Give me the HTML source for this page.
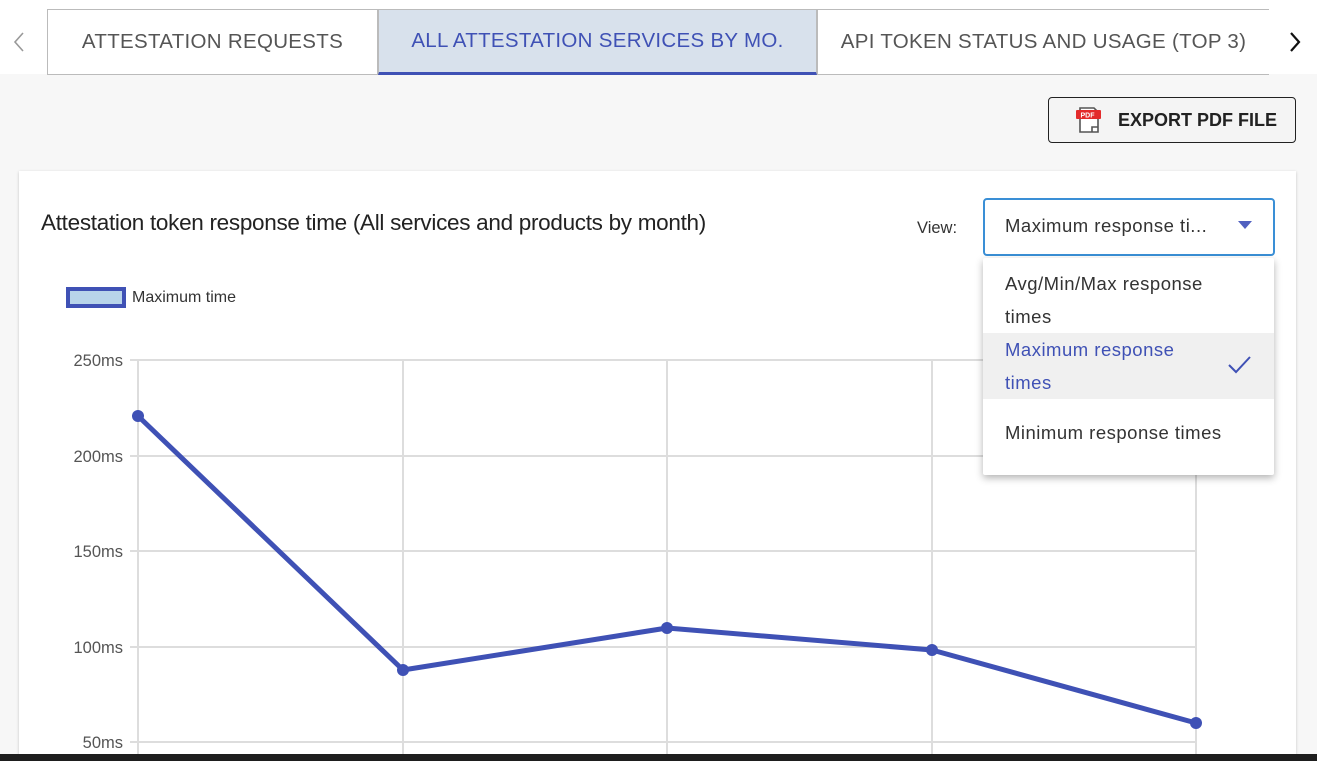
<!DOCTYPE html>
<html style="width:1317px;height:761px;overflow:hidden"><head><style>
*{margin:0;padding:0;box-sizing:border-box}
body{width:1317px;height:761px;overflow:hidden;background:#f7f7f7;font-family:"Liberation Sans",sans-serif;position:relative}
.topbar{position:absolute;left:0;top:0;width:1317px;height:74px;background:#fff}
.tab{position:absolute;top:9px;height:66px;border:1px solid #bbb;display:flex;align-items:center;justify-content:center;font-size:20.5px;color:#555;letter-spacing:0.3px}
.btn{position:absolute;left:1048px;top:97px;width:248px;height:46px;border:1px solid #222;border-radius:4px;background:#f4f4f4;font-size:18px;font-weight:bold;color:#222;display:flex;align-items:center;padding-left:69px}
.card{position:absolute;left:19px;top:171px;width:1277px;height:590px;background:#fff;box-shadow:0 1px 3px rgba(0,0,0,.2)}
.menu{position:absolute;left:983px;top:258px;width:291px;height:217px;background:#fff;box-shadow:0 3px 8px rgba(0,0,0,.3);border-radius:2px}
.mi{position:absolute;left:22px;font-size:18.5px;color:#333;line-height:33px;letter-spacing:0.5px}
</style></head><body>
<div class="topbar"></div>
<svg style="position:absolute;left:12px;top:31px" width="14" height="22"><path d="M11 2L3 11l8 9" fill="none" stroke="#999" stroke-width="1.6"/></svg>
<div class="tab" style="left:47px;width:331px;background:#fff">ATTESTATION REQUESTS</div>
<div class="tab" style="left:378px;width:439px;background:#d8e1ec;color:#3f51b5;border-bottom:3px solid #3f51b5">ALL ATTESTATION SERVICES BY MO.</div>
<div class="tab" style="left:817px;width:452px;background:#fff;border-right:none">API TOKEN STATUS AND USAGE (TOP 3)</div>
<svg style="position:absolute;left:1288px;top:31px" width="14" height="22"><path d="M3 2l8 9-8 9" fill="none" stroke="#111" stroke-width="2.2"/></svg>
<div class="btn">EXPORT PDF FILE</div>
<svg style="position:absolute;left:1074px;top:105px" width="30" height="30"><path d="M6 3h14l4 4v20H6z" fill="#fff" stroke="#555" stroke-width="1.6"/><path d="M18 27v-5h6" fill="none" stroke="#555" stroke-width="1.6"/><rect x="2" y="5" width="25" height="9" rx="1" fill="#e32b2b"/><text x="6.5" y="12.5" font-size="7" fill="#fff" font-weight="bold" font-family="Liberation Sans">PDF</text></svg>
<div class="card"></div>
<div style="position:absolute;left:41px;top:210px;font-size:22.5px;color:#222;letter-spacing:-0.3px">Attestation token response time (All services and products by month)</div>
<div style="position:absolute;left:917px;top:219px;font-size:16.5px;color:#333">View:</div>
<div style="position:absolute;left:983px;top:198px;width:292px;height:58px;border:2px solid #3a8fd6;border-radius:4px;font-size:18.5px;color:#333;padding:15px 0 0 20px;letter-spacing:0.5px;white-space:nowrap">Maximum response ti...</div>
<div style="position:absolute;left:1238px;top:221px;border-left:7px solid transparent;border-right:7px solid transparent;border-top:8px solid #5060c0"></div>
<div style="position:absolute;left:66px;top:287px;width:60px;height:21px;border:4px solid #3f51b5;background:#b8d4ea"></div>
<div style="position:absolute;left:132px;top:289px;font-size:16px;color:#333">Maximum time</div>
<svg style="position:absolute;left:0;top:0" width="1317" height="761">
<g stroke="#ddd" stroke-width="2">
<line x1="130" y1="360" x2="1196" y2="360"/><line x1="130" y1="456" x2="1196" y2="456"/><line x1="130" y1="551" x2="1196" y2="551"/><line x1="130" y1="647" x2="1196" y2="647"/><line x1="130" y1="742" x2="1196" y2="742"/>
<line x1="138" y1="360" x2="138" y2="755"/><line x1="403" y1="360" x2="403" y2="755"/><line x1="667" y1="360" x2="667" y2="755"/><line x1="932" y1="360" x2="932" y2="755"/><line x1="1196" y1="360" x2="1196" y2="755"/>
</g>
<g font-family="Liberation Sans" font-size="16.5" fill="#555" text-anchor="end">
<text x="123" y="366">250ms</text><text x="123" y="462">200ms</text><text x="123" y="557">150ms</text><text x="123" y="653">100ms</text><text x="123" y="748">50ms</text></g>
<polyline points="138,416 403,670 667,628 932,650 1196,723" fill="none" stroke="#3f51b5" stroke-width="5" stroke-linejoin="round"/>
<g fill="#3f51b5"><circle cx="138" cy="416" r="6"/><circle cx="403" cy="670" r="6"/><circle cx="667" cy="628" r="6"/><circle cx="932" cy="650" r="6"/><circle cx="1196" cy="723" r="6"/></g>
</svg>
<div class="menu">
<div class="mi" style="top:9px">Avg/Min/Max response<br>times</div>
<div style="position:absolute;left:0;top:75px;width:291px;height:66px;background:#f0f0f0"></div>
<div class="mi" style="top:75px;color:#3f51b5">Maximum response<br>times</div>
<svg style="position:absolute;left:244px;top:96px" width="26" height="22"><path d="M2 11l7 7L23 3" fill="none" stroke="#3f51b5" stroke-width="2"/></svg>
<div class="mi" style="top:158px">Minimum response times</div>
</div>
<div style="position:absolute;left:0;top:754px;width:1317px;height:7px;background:#1e1e1e"></div>
</body></html>
